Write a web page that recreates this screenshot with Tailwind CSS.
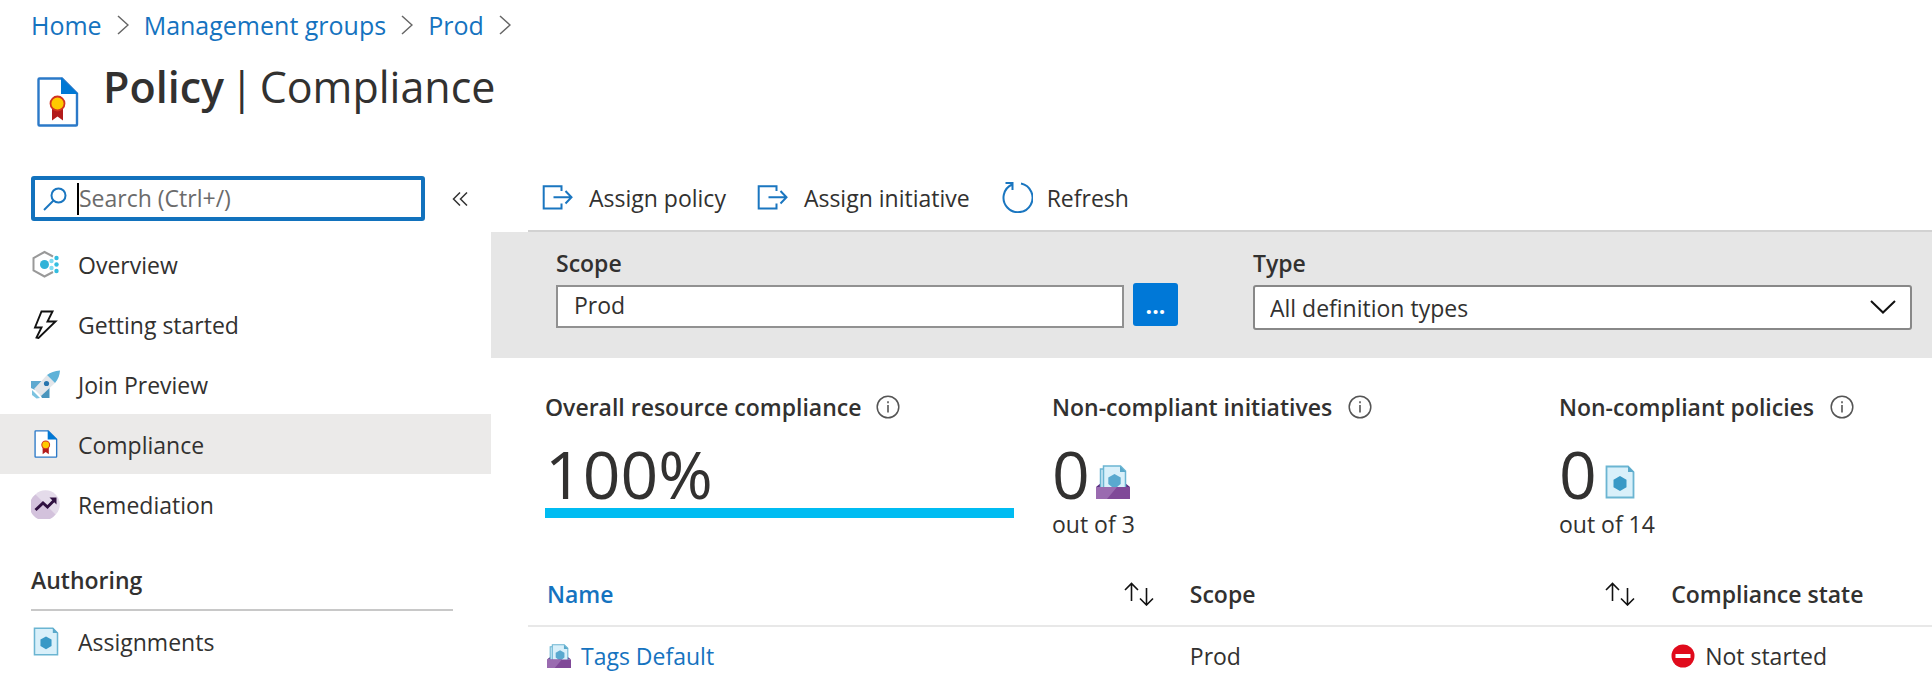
<!DOCTYPE html>
<html lang="en">
<head>
<meta charset="utf-8">
<title>Policy | Compliance</title>
<script src="https://cdn.jsdelivr.net/npm/@tailwindcss/browser@4"></script>
</head>
<body class="min-h-screen overflow-x-hidden bg-white font-['Open_Sans','Noto_Sans',sans-serif] text-[23px] leading-8 text-[#323130]">
<svg class="hidden" aria-hidden="true">
  <symbol id="certificate" viewBox="0 0 42 50">
    <path d="M1.5 2.5Q1.5 1.500 2.500 1.500H25L40 16.500V47.500Q40 48.500 39 48.500H2.500Q1.500 48.500 1.500 47.500Z" fill="#fff" stroke="#2b79c8" stroke-width="2.400"/>
    <path d="M24 0.500L41 17H24Z" fill="#0078d4"/>
    <path d="M15 30H26V43.500L20.500 39.500L15 43.500Z" fill="#b31b1b"/>
    <circle cx="20.500" cy="26.500" r="7" fill="#ffca00" stroke="#d2331f" stroke-width="1.800"/>
  </symbol>
  <symbol id="definition" viewBox="0 0 30 34">
    <path d="M1.500 1.500H23L28.500 7V32.500H1.500Z" fill="#d9f0fa" stroke="#6bb5d2" stroke-width="1.800"/>
    <path d="M23 1L29 7H23Z" fill="#5aa9cb"/>
    <path d="M15 11L21.500 14.700V22.300L15 26L8.500 22.300V14.700Z" fill="#3999c6"/>
  </symbol>
  <symbol id="initiative" viewBox="0 0 34 34">
    <path d="M0 22L5 18H29L34 22Z" fill="#5c2d80"/>
    <path d="M4.500 4H25V28H4.500Z" fill="#cdeaf7" stroke="#6bb5d2" stroke-width="1.500"/>
    <path d="M7.500 1H24.500L29.500 6V28H7.500Z" fill="#d9f0fa" stroke="#6bb5d2" stroke-width="1.500"/>
    <path d="M24 1L30 7H24Z" fill="#5aa9cb"/>
    <path d="M18.500 9L24.700 12.500V19L18.500 24L12.300 19V12.500Z" fill="#5aa9cf"/>
    <path d="M0 22H34V34H0Z" fill="#804998"/>
    <path d="M0 22H21L11 34H0Z" fill="#9a6bb0"/>
  </symbol>
  <symbol id="assign" viewBox="0 0 30 25">
    <path d="M19 6V1.200H1.200V23.500H19V18.500M11 12.300H29M23 6L29 12.300L23 18.500" fill="none" stroke="#1a76c0" stroke-width="2"/>
  </symbol>
  <symbol id="info" viewBox="0 0 24 24">
    <circle cx="12" cy="12" r="10.800" fill="none" stroke="#555" stroke-width="1.500"/>
    <path d="M12 10V17.500M12 6.300V8.300" stroke="#555" stroke-width="1.600"/>
  </symbol>
  <symbol id="sort" viewBox="0 0 30 24">
    <path d="M7.500 19V1.500M1 8L7.500 1.500L14 8M22.500 6V23M16 16.500L22.500 23L29 16.500" fill="none" stroke="#111" stroke-width="1.600"/>
  </symbol>
  <symbol id="crumb" viewBox="0 0 12 20">
    <path d="M1 1L11 10L1 19" fill="none" stroke="#666" stroke-width="1.500"/>
  </symbol>
</svg>

<header class="pl-[31px]">
  <nav aria-label="Breadcrumb" class="flex items-center gap-[15px] pt-[9px] text-[25px] text-[#1573bf]">
    <a href="#">Home</a>
    <svg class="h-5 w-3"><use href="#crumb"/></svg>
    <a href="#">Management groups</a>
    <svg class="h-5 w-3"><use href="#crumb"/></svg>
    <a href="#">Prod</a>
    <svg class="h-5 w-3"><use href="#crumb"/></svg>
  </nav>
  <div class="flex items-start gap-6 pt-4 pl-1.5">
    <svg class="mt-5 h-[50px] w-[42px]"><use href="#certificate"/></svg>
    <h1 class="flex gap-1.5 text-[43px] leading-[60px]"><span class="font-semibold">Policy</span><span>|</span><span>Compliance</span></h1>
  </div>
</header>

<div class="flex pt-[49px]">
  <aside class="w-[491px] shrink-0">
    <div class="flex items-center gap-[27px] pl-[31px]">
      <label class="flex h-[45px] w-[394px] items-center gap-2.5 rounded-[3px] border-4 border-[#1272bd] pl-2">
        <svg viewBox="0 0 24 24" class="size-6 shrink-0" fill="none" stroke="#1a76c0" stroke-width="2"><circle cx="15.500" cy="8.500" r="7"/><path d="M10.500 13.500L1 23"/></svg>
        <span class="flex h-8 min-w-0 grow items-center border-l-2 border-black">
          <input type="text" aria-label="Search" placeholder="Search (Ctrl+/)" class="w-full min-w-0 pb-0.5 outline-none placeholder:text-[#6b6b6b]">
        </span>
      </label>
      <button type="button" aria-label="Collapse menu"><svg viewBox="0 0 16 14" class="h-3.5 w-4" fill="none" stroke="#333" stroke-width="1.500"><path d="M8 0.500L1.500 7L8 13.500M15 0.500L8.500 7L15 13.500"/></svg></button>
    </div>
    <nav aria-label="Policy" class="pt-[13px]">
      <a href="#" class="flex h-[60px] items-center gap-[18px] pl-[31px]">
        <svg viewBox="0 0 29 29" class="size-[29px]"><path d="M22 6.500L13.500 2L2.500 8V20.500L13.500 26.500L22 22" fill="none" stroke="#999" stroke-width="2"/><circle cx="13.500" cy="14.500" r="4.500" fill="#2fb3d8"/><g fill="#32bde0"><circle cx="25.500" cy="8" r="2.200"/><circle cx="25.500" cy="14.500" r="2.200"/><circle cx="25.500" cy="21" r="2.200"/></g><g fill="#7ddcf2"><circle cx="20.500" cy="11" r="2.200"/><circle cx="20.500" cy="18" r="2.200"/></g></svg><span class="pt-0.5">Overview</span></a>
      <a href="#" class="flex h-[60px] items-center gap-[18px] pl-[31px]">
        <svg viewBox="0 0 29 29" class="size-[29px]"><path d="M10.500 1.500H21.500L16.500 11.500H24.500L7.500 28L5.500 27.500L10.500 17.500H4Z" fill="#fff" stroke="#111" stroke-width="1.900"/></svg><span class="pt-0.5">Getting started</span></a>
      <a href="#" class="flex h-[60px] items-center gap-[18px] pl-[31px]">
        <svg viewBox="0 0 29 29" class="size-[29px]"><path d="M0 11H11L4 20L0 18Z" fill="#5ea9d0"/><path d="M18.500 17V28H11L9 24Z" fill="#4a95bd"/><path d="M1 20L9 28L5.500 28.500L1 25Z" fill="#7cc3e0"/><path d="M16 5L24 13L10 26L3 19Z" fill="#e3e6ea"/><path d="M16 5Q21 1 29 0.500Q28.500 8 24 13Z" fill="#5eb2d8"/><circle cx="15.500" cy="13.500" r="2.600" fill="#2874ad"/></svg><span class="pt-0.5">Join Preview</span></a>
      <a href="#" aria-current="page" class="flex h-[60px] items-center gap-[18px] bg-[#ebeae9] pl-[31px]">
        <span class="flex w-[29px] justify-center"><svg class="h-7 w-6"><use href="#certificate"/></svg></span><span class="pt-0.5">Compliance</span></a>
      <a href="#" class="flex h-[60px] items-center gap-[18px] pl-[31px]">
        <svg viewBox="0 0 29 29" class="size-[29px]"><circle cx="14.500" cy="14.500" r="14.300" fill="#e4dbea"/><path d="M4.500 4.500A14.300 14.300 0 1 0 24.500 24.500Z" fill="#d3c2dc"/><path d="M4.500 20L12 13L16.500 17L23 10.500" fill="none" stroke="#2f1040" stroke-width="3"/><path d="M18.500 7.500H25.500V14.500Z" fill="#2f1040"/></svg><span class="pt-0.5">Remediation</span></a>
      <h2 class="mr-[38px] ml-[31px] mt-[30px] border-b-2 border-[#c8c8c8] pb-[13px] font-semibold">Authoring</h2>
      <a href="#" class="flex h-[60px] items-center gap-[18px] pl-[31px]">
        <span class="flex w-[29px] justify-center"><svg class="h-[29px] w-[26px]"><use href="#definition"/></svg></span><span class="pt-0.5">Assignments</span></a>
    </nav>
  </aside>

  <main class="min-w-0 grow">
    <div class="ml-[37px] flex h-14 items-start gap-[31px] border-b-2 border-[#d2d2d2] pl-3.5 pt-1">
      <button type="button" class="flex items-center gap-4"><svg class="h-[25px] w-[31px]"><use href="#assign"/></svg><span class="pt-0.5">Assign policy</span></button>
      <button type="button" class="flex items-center gap-4"><svg class="h-[25px] w-[31px]"><use href="#assign"/></svg><span class="pt-0.5">Assign initiative</span></button>
      <button type="button" class="flex items-center gap-3.5"><svg viewBox="0 0 32 32" class="size-8" fill="none" stroke="#1a76c0" stroke-width="2"><path d="M20 2.500A14.500 14.500 0 1 1 11 3.500M4.500 2H11.500V9"/></svg><span class="pt-0.5">Refresh</span></button>
    </div>
    <section aria-label="Filters" class="flex h-[126px] items-start bg-[#e6e6e6] pl-[65px] pr-5 pt-[15px]">
      <div class="min-w-0 grow">
        <label for="scope" class="block font-semibold">Scope</label>
        <div class="flex items-start gap-[9px] pt-1">
          <input id="scope" type="text" value="Prod" class="mt-0.5 h-[43px] min-w-0 grow border-2 border-[#919191] bg-white px-4 pb-1">
          <button type="button" aria-label="Select scope" class="h-[43px] w-[45px] rounded-[3px] bg-[#0078d7] font-bold text-white">...</button>
        </div>
      </div>
      <div class="relative ml-[75px] w-[659px] shrink-0">
        <label for="type" class="block font-semibold">Type</label>
        <select id="type" class="mt-1.5 h-[45px] w-full appearance-none rounded-[3px] border-2 border-[#888] bg-white px-[15px]"><option>All definition types</option></select>
        <svg viewBox="0 0 26 14" class="pointer-events-none absolute right-4 bottom-4 h-3.5 w-[26px]" fill="none" stroke="#111" stroke-width="2"><path d="M1 1L13 12.500L25 1"/></svg>
      </div>
    </section>

    <section aria-label="Summary" class="grid grid-cols-[507fr_507fr_373fr] pl-[54px] pt-[33px]">
      <div class="pr-[38px]">
        <h2 class="flex items-center gap-3.5 font-semibold">Overall resource compliance <svg class="size-6"><use href="#info"/></svg></h2>
        <p class="pt-4 text-[66px] leading-[69px]">100%</p>
        <div class="h-2.5 bg-[#00bcf2]"></div>
      </div>
      <div>
        <h2 class="flex items-center gap-4 font-semibold">Non-compliant initiatives <svg class="size-6"><use href="#info"/></svg></h2>
        <p class="flex items-end gap-1.5 pt-4 text-[66px] leading-[69px]">0<svg class="mb-[9px] size-[34px]"><use href="#initiative"/></svg></p>
        <p>out of 3</p>
      </div>
      <div>
        <h2 class="flex items-center gap-4 font-semibold">Non-compliant policies <svg class="size-6"><use href="#info"/></svg></h2>
        <p class="flex items-end gap-2 pt-4 text-[66px] leading-[69px]">0<svg class="mb-[9px] h-[34px] w-[30px]"><use href="#definition"/></svg></p>
        <p>out of 14</p>
      </div>
    </section>

    <div class="pt-[23px] pl-[37px]">
    <table class="w-full table-fixed text-left">
      <colgroup><col class="w-[46%]"><col class="w-[34%]"><col></colgroup>
      <thead>
        <tr class="h-[63px] border-b-2 border-[#e8e8e8]">
          <th scope="col" class="pl-[19px] pr-5 font-semibold text-[#1573bf]"><span class="flex items-center justify-between">Name <button type="button" aria-label="Sort by name"><svg class="h-6 w-[30px]"><use href="#sort"/></svg></button></span></th>
          <th scope="col" class="pl-4 pr-4 font-semibold"><span class="flex items-center justify-between">Scope <button type="button" aria-label="Sort by scope"><svg class="h-6 w-[30px]"><use href="#sort"/></svg></button></span></th>
          <th scope="col" class="pl-5 font-semibold">Compliance state</th>
        </tr>
      </thead>
      <tbody>
        <tr class="h-[46px] align-bottom">
          <td class="pl-[19px]"><span class="flex items-center gap-2.5"><svg class="size-6"><use href="#initiative"/></svg><a href="#" class="text-[#1573bf]">Tags Default</a></span></td>
          <td class="pl-4">Prod</td>
          <td class="pl-5"><span class="flex items-center gap-2.5"><svg viewBox="0 0 24 24" class="size-6"><circle cx="12" cy="12" r="11.500" fill="#e00b1c"/><path d="M4.500 10H19.500V14H4.500Z" fill="#fff"/></svg>Not started</span></td>
        </tr>
      </tbody>
    </table>
    </div>
  </main>
</div>
</body>
</html>
